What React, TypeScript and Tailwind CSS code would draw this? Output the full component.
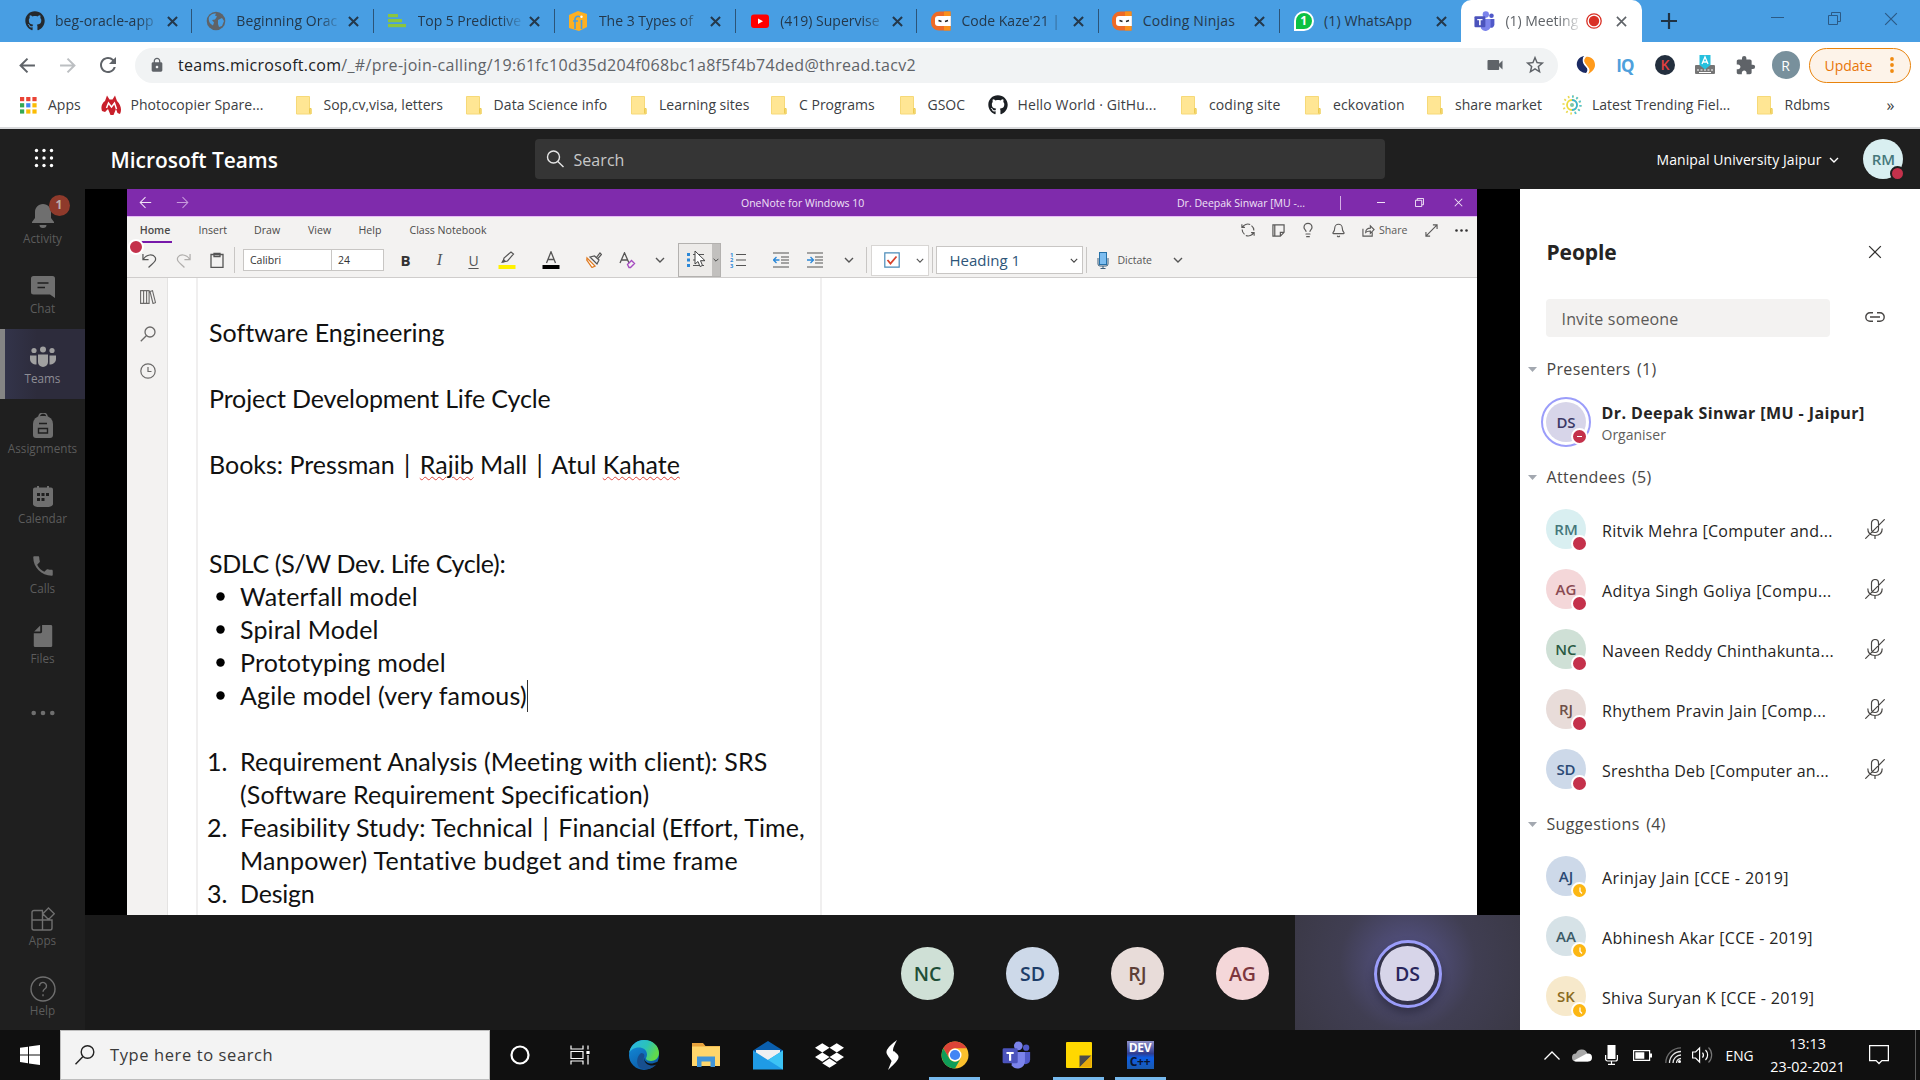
import React from "react";
import { FaGithub, FaDropbox } from "react-icons/fa";
import { MdLock, MdExtension, MdVideocam, MdStarBorder, MdRefresh, MdPhone } from "react-icons/md";
import { Bell, Lightbulb } from "lucide-react";

type P = { className?: string };

/* ---------- small shared glyphs ---------- */
const Cross = ({ className = "" }: P) => (
  <svg viewBox="0 0 12 12" className={className} fill="none" stroke="currentColor"><path d="M1 1l10 10M11 1L1 11" /></svg>
);
const Chevron = ({ className = "" }: P) => (
  <svg viewBox="0 0 10 6" className={className} fill="none" stroke="currentColor" strokeWidth="1.4"><path d="M1 1l4 4 4-4" /></svg>
);
const Arrow = ({ className = "" }: P) => (
  <svg viewBox="0 0 16 16" className={className} fill="none" stroke="currentColor"><path d="M15 8H1.5M8 1.5L1.5 8 8 14.5" /></svg>
);
const TeamsLogo = ({ className = "" }: P) => (
  <svg viewBox="0 0 24 24" className={className}>
    <circle cx="20" cy="5.5" r="2.6" fill="#5059c9" />
    <path d="M16 9h7.3v6.5a3.7 3.7 0 0 1-5 3.4z" fill="#5059c9" />
    <circle cx="13.5" cy="4" r="3.6" fill="#7b83eb" />
    <path d="M8 9h11v8a6 6 0 0 1-11 3z" fill="#7b83eb" />
    <rect x="0.5" y="6" width="12.5" height="12.5" rx="1.2" fill="#4b53bc" />
    <path d="M3.7 9h6v1.7H7.6v5.6H5.8v-5.6H3.7z" fill="#fff" />
  </svg>
);

/* ---------- browser tabs ---------- */
const Globe = () => (
  <svg viewBox="0 0 20 20" className="size-5">
    <circle cx="10" cy="10" r="9.3" fill="#5f6368" />
    <path d="M3 6c2-3 5-4 7-3.500l-1 2 2 1-2 3-3 .5 2 2.500-1 3C4 13 2 10 3 6zM12 9l4-2 2 3-2 5-3 1-1-3z" fill="#489ee3" />
  </svg>
);
const Bars = () => (
  <svg viewBox="0 0 20 20" className="size-5" fill="#8bc53f">
    <rect x="1" y="3" width="10" height="3.200" /><rect x="1" y="8" width="14" height="3.200" /><rect x="1" y="13" width="18" height="3.200" />
  </svg>
);
const Cube = () => (
  <svg viewBox="0 0 20 20" className="size-5">
    <path d="M1 4l9-4 9 3v13l-8 4-10-3z" fill="#fdb022" />
    <path d="M7 18V8a3 3 0 0 1 5-2M5 10h5M13.500 9v9" stroke="#489ee3" strokeWidth="1.600" fill="none" />
    <circle cx="13.500" cy="5.800" r="1.200" fill="#fff" />
  </svg>
);
const YouTube = () => (
  <svg viewBox="0 0 20 20" className="size-5"><rect x="1" y="3.500" width="18" height="13.500" rx="3" fill="#f00" /><path d="M8 7.500l5 2.800-5 2.800z" fill="#fff" /></svg>
);
const Ninja = () => (
  <svg viewBox="0 0 20 20" className="size-5">
    <path d="M19.500 .5v19H8a8 8 0 0 1-8-8V9A8.500 8.500 0 0 1 8.500 .5z" fill="#ee6a26" />
    <path d="M13 .5h6.500v4.500H13zM13 15h6.500v4.500H13z" fill="#f9901b" />
    <path d="M19.800 5v10H7a3 3 0 0 1-3-3V8a3 3 0 0 1 3-3z" fill="#fff" />
    <path d="M7.500 9.500l3 1M17 9.500l-3 1" stroke="#222" strokeWidth="1.600" />
  </svg>
);
const WhatsApp = () => (
  <span className="flex size-5 items-center justify-center rounded-full rounded-bl-sm border-2 border-white bg-[#0cc143] text-[12px] font-bold leading-none text-white">1</span>
);

const tabs = [
  { t: "beg-oracle-app", icon: <FaGithub className="size-5 text-[#24292e]" />, cls: "tracking-[0.05px]" },
  { t: "Beginning Orac", icon: <Globe />, cls: "tracking-[0.1px]" },
  { t: "Top 5 Predictive", icon: <Bars />, cls: "-tracking-[0.05px]" },
  { t: "The 3 Types of", icon: <Cube />, cls: "" },
  { t: "(419) Supervise", icon: <YouTube />, cls: "" },
  { t: "Code Kaze'21 |", icon: <Ninja />, cls: "" },
  { t: "Coding Ninjas", icon: <Ninja />, cls: "tracking-[0.2px]" },
  { t: "(1) WhatsApp", icon: <WhatsApp />, cls: "tracking-[0.1px]" },
];

const TabStrip = () => (
  <div className="flex h-[42px] bg-[#489ee3] pl-[11px] text-[#24384b]">
    {tabs.map((tab, i) => (
      <div key={tab.t} className="flex w-[181.3px] shrink-0 items-center pl-[13.500px]">
        <span className="w-[30.500px]">{tab.icon}</span>
        <span className={"w-[106px] whitespace-nowrap text-sm " + (i < 6 ? "[mask-image:linear-gradient(90deg,#000_78%,#0003_96%)]" : "")}>
          <span className={tab.cls}>{tab.t}</span>
        </span>
        <Cross className="ml-[5.500px] size-[11px] stroke-[2.200]" />
        <span className={i < 7 ? "ml-auto h-6 w-px bg-[#2c5478]" : ""} />
      </div>
    ))}
    <div className="flex h-[42px] w-[181px] shrink-0 items-center rounded-t-[10px] bg-white pl-[13px] text-[#5f6368]">
      <TeamsLogo className="size-[21px]" />
      <span className="ml-[10px] w-[76px] whitespace-nowrap text-sm [mask-image:linear-gradient(90deg,#000_70%,#0003_96%)]">(1) Meeting</span>
      <svg viewBox="0 0 16 16" className="ml-[5px] size-4"><circle cx="8" cy="8" r="7.200" fill="none" stroke="#d93025" strokeWidth="1.300" /><circle cx="8" cy="8" r="5.200" fill="#d93025" /></svg>
      <Cross className="ml-[14px] size-[11px] stroke-[1.800]" />
    </div>
    <svg viewBox="0 0 16 16" className="ml-[19px] mt-[13px] size-4 stroke-[#1f3244]" strokeWidth="2.200"><path d="M8 0v16M0 8h16" /></svg>
    <div className="ml-auto flex items-start gap-[43.500px] pr-[22px] pt-[12px] text-[#2b5a86]">
      <svg viewBox="0 0 13 13" className="size-[13px]" stroke="currentColor"><path d="M0 5.500h13" /></svg>
      <svg viewBox="0 0 13 13" className="size-[13px]" stroke="currentColor" fill="none"><path d="M.5 3.500h9v9h-9zM3.500 3.500v-3h9v9h-3" /></svg>
      <Cross className="size-[14px] stroke-[1]" />
    </div>
  </div>
);

/* ---------- address bar ---------- */
const AddressBar = () => (
  <div className="flex h-[46px] items-center bg-white text-[#5f6368]">
    <Arrow className="ml-[19px] size-[17px] stroke-[1.900]" />
    <Arrow className="ml-[23px] size-[17px] rotate-180 stroke-[1.900] text-[#bcbfc2]" />
    <MdRefresh className="ml-[20px] size-[24px]" />
    <div className="ml-[15px] flex h-[35px] w-[1423px] items-center rounded-full bg-[#f1f3f4]">
      <MdLock className="ml-[14px] size-4" />
      <span className="ml-[13px] whitespace-nowrap text-base tracking-[0.306px]">
        <span className="text-[#202124]">teams.microsoft.com</span>/_#/pre-join-calling/19:61fc10d35d204f068bc1a8f5f4b74ded@thread.tacv2
      </span>
      <MdVideocam className="ml-auto size-5" />
      <MdStarBorder className="ml-[19px] mr-[12px] size-[22px]" />
    </div>
    <svg viewBox="0 0 20 20" className="ml-[17.500px] size-5">
      <path d="M8 1C3 2 0 6 1 11c1 4 5 7 9 7 3-2 2-4 0-6C7 9 6 6 8 1z" fill="#1b2a63" />
      <path d="M10 2c5-1 9 3 9 8 0 4-3 7-7 9 3-4 1-6-1-8-3-3-4-6-1-9z" fill="#ff9a1b" />
      <path d="M8 2c-2 4 0 6 2 8.500 2 2.500 3 4 1 7.500" stroke="#fff" strokeWidth="1.200" fill="none" />
    </svg>
    <span className="ml-[20px] w-[19px] text-center text-[17px] font-bold leading-none tracking-[-0.800px] text-[#4ea0dc]">IQ</span>
    <span className="ml-[20.500px] flex size-5 items-center justify-center rounded-full bg-[#232f3e] text-[14px] font-semibold leading-none text-[#e2403f]">K</span>
    <svg viewBox="0 0 20 20" className="ml-[20px] size-5">
      <rect x="0" y="10" width="20" height="9" rx="1" fill="#757575" />
      <path d="M2 15h2m1.500 0h2m1.500 0h2m1.500 0h2m1.500 0h2M4 17.500h12" stroke="#fff" strokeWidth="1.200" />
      <path d="M4.500 0h11v10L10 14.500 4.500 10z" fill="#26c0de" />
      <path d="M7 9l3-7 3 7M8 7h4" stroke="#fff" strokeWidth="1.300" fill="none" />
    </svg>
    <MdExtension className="ml-[19.500px] size-[21px]" />
    <span className="ml-[16px] flex size-7 items-center justify-center rounded-full bg-[#78909c] text-[14px] text-white">R</span>
    <div className="ml-[9px] flex h-[35px] w-[102px] items-center rounded-full border border-[#e8830c] bg-[#fdf3e9] pl-[15px] text-[14px] text-[#e8760a]">
      Update
      <svg viewBox="0 0 4 18" className="ml-[18px] h-[18px] w-1 fill-[#f08a10]"><circle cx="2" cy="3" r="1.900" /><circle cx="2" cy="9" r="1.900" /><circle cx="2" cy="15" r="1.900" /></svg>
    </div>
  </div>
);

/* ---------- bookmarks ---------- */
const Folder = () => (
  <svg viewBox="0 0 20 20" className="size-5">
    <path d="M2.500 1.500h13v12h1.500v5.500H2.500z" fill="#ffe694" stroke="#f6d978" />
    <path d="M15.500 18.500v-5h1.500v5.500" fill="none" stroke="#eccb52" />
  </svg>
);
const AppsGrid = () => (
  <svg viewBox="0 0 20 20" className="size-5">
    {["#ea4335", "#ea4335", "#ea4335", "#34a853", "#4285f4", "#fbbc04", "#34a853", "#fbbc04", "#fbbc04"].map((c, i) => (
      <rect key={i} x={2 + (i % 3) * 6.2} y={2 + Math.floor(i / 3) * 6.2} width="4.200" height="4.200" fill={c} />
    ))}
  </svg>
);
const MLogo = () => (
  <svg viewBox="0 0 20 20" className="size-5">
    <path d="M6 .5l2.500 4h3L14 .5l2 5.500c4 4 5 9 3 13l-2.500-1L15 14l-2.500 6h-3L7 14l-3 3-3-1C-.5 12 1 8 4 6z" fill="#c81f2a" />
    <path d="M5.500 13L7.500 8l3 4 3-4 2 6" stroke="#fff" strokeWidth="1.500" fill="none" />
  </svg>
);
const Sun = () => (
  <svg viewBox="0 0 20 20" className="size-5" fill="none">
    <circle cx="10" cy="10" r="8.500" stroke="#e9d94f" strokeWidth="2.200" strokeDasharray="1.600 2.850" />
    <circle cx="10" cy="10" r="5" stroke="#edda3e" strokeWidth="1.800" />
    <path d="M10 1.500a8.500 8.500 0 0 1 0 17" stroke="#4cc3e0" strokeWidth="2.200" strokeDasharray="1.600 2.850" />
    <path d="M10 5a5 5 0 0 1 0 10" stroke="#35b5dc" strokeWidth="1.800" />
    <circle cx="10" cy="10" r="2" fill="#7cc6a5" />
  </svg>
);
const bookmarks = [
  { t: "Apps", icon: <AppsGrid />, w: "w-[82.500px]", g: "" },
  { t: "Photocopier Spare...", icon: <MLogo />, w: "w-[193px]", g: "tracking-[0.050px]" },
  { t: "Sop,cv,visa, letters", icon: <Folder />, w: "w-[170px]", g: "" },
  { t: "Data Science info", icon: <Folder />, w: "w-[165.500px]", g: "tracking-[0.100px]" },
  { t: "Learning sites", icon: <Folder />, w: "w-[140px]", g: "" },
  { t: "C Programs", icon: <Folder />, w: "w-[128.500px]", g: "" },
  { t: "GSOC", icon: <Folder />, w: "w-[90px]", g: "" },
  { t: "Hello World · GitHu...", icon: <FaGithub className="size-5 text-[#1b1f23]" />, w: "w-[191.500px]", g: "tracking-[0.130px]" },
  { t: "coding site", icon: <Folder />, w: "w-[124px]", g: "tracking-[0.120px]" },
  { t: "eckovation", icon: <Folder />, w: "w-[122px]", g: "tracking-[0.100px]" },
  { t: "share market", icon: <Folder />, w: "w-[137px]", g: "" },
  { t: "Latest Trending Fiel...", icon: <Sun />, w: "w-[192.500px]", g: "" },
  { t: "Rdbms", icon: <Folder />, w: "w-[132px]", g: "" },
];
const Bookmarks = () => (
  <div className="flex h-[41px] items-center border-b-2 border-[#d9dadc] bg-white pb-[5px] pl-[18px] text-sm text-[#3c4043]">
    {bookmarks.map((b) => (
      <div key={b.t} className={"flex shrink-0 items-center gap-[10px] whitespace-nowrap " + b.w}>{b.icon}<span className={b.g}>{b.t}</span></div>
    ))}
    <span className="text-base leading-none">»</span>
  </div>
);

/* ---------- Teams header ---------- */
const TeamsHeader = () => (
  <div className="flex h-[60px] items-center bg-[#1f1f1f]">
    <svg viewBox="0 0 20 20" className="mb-[2px] ml-[33.500px] size-5 fill-white">
      {[0, 1, 2, 3, 4, 5, 6, 7, 8].map((i) => <circle key={i} cx={2.5 + (i % 3) * 7.5} cy={2.5 + Math.floor(i / 3) * 7.5} r="1.700" />)}
    </svg>
    <span className="ml-[57px] w-[424px] whitespace-nowrap pt-[2px] text-[20.900px] font-semibold leading-none text-white">Microsoft Teams</span>
    <div className="flex h-10 w-[850px] items-center rounded bg-[#353535] text-[#c8c8c8]">
      <svg viewBox="0 0 18 18" className="ml-[11px] size-[18px]" fill="none" stroke="#e6e6e6" strokeWidth="1.400"><circle cx="7.500" cy="7" r="6" /><path d="M11.800 11.500L17.500 17" /></svg>
      <span className="ml-[10px] pt-[2px] text-base tracking-[0.050px]">Search</span>
    </div>
    <span className="ml-[272px] whitespace-nowrap pt-px text-sm tracking-[0.090px] text-white">Manipal University Jaipur</span>
    <Chevron className="ml-[8px] mt-[2px] h-[6px] w-[10px] text-white" />
    <div className="relative ml-[24px] flex size-10 items-center justify-center rounded-full bg-[#d9eff1] text-[15px] font-semibold text-[#45777b]">
      RM
      <span className="absolute bottom-[-2px] right-[-2px] size-[15px] rounded-full border-2 border-[#1f1f1f] bg-[#c4314b]" />
    </div>
  </div>
);

/* ---------- Teams rail ---------- */
const RailItem = ({ label, active, children }: { label: string; active?: boolean; children: React.ReactNode }) => (
  <div className={"flex h-[70px] w-[85px] flex-col items-center " + (active ? "border-l-[5px] border-[#858585] bg-[linear-gradient(90deg,#33344a_0%,#2d2c3c_40%)] pr-[5px] text-[#a0a0a0]" : "text-[#6f6f6f]")}>
    <span className="mt-[14px] flex h-7 items-center">{children}</span>
    <span className={"-mt-px whitespace-nowrap text-[11.700px] leading-[16px] " + (active ? "text-[#8d8d95]" : "text-[#5c5c5c]")}>{label}</span>
  </div>
);
const Rail = () => (
  <div className="flex w-[85px] shrink-0 flex-col bg-[#1f1f1f]">
    <RailItem label="Activity">
      <span className="relative -mt-[3px]">
        <svg viewBox="0 0 24 26" className="h-[26px] w-6" fill="currentColor"><path d="M12 1c-5 0-8 4-8 8v6l-3 4v1h22v-1l-3-4V9c0-4-3-8-8-8zM8.500 22h7a3.500 3 0 0 1-7 0z" /></svg>
        <span className="absolute -right-[15px] -top-[8px] flex size-[21px] items-center justify-center rounded-full bg-[#8f3a2b] text-[12px] font-bold text-[#bdb0ad]">1</span>
      </span>
    </RailItem>
    <RailItem label="Chat">
      <svg viewBox="0 0 24 24" className="size-6" fill="currentColor"><path d="M2.500 1h19A2.500 2.500 0 0 1 24 3.500V23l-5-3.500H2.500A2.500 2.500 0 0 1 0 17V3.500A2.500 2.500 0 0 1 2.500 1z" /><path d="M6.500 8h11M6.500 12.500h7.500" stroke="#1f1f1f" strokeWidth="1.400" /></svg>
    </RailItem>
    <RailItem label="Teams" active>
      <svg viewBox="0 0 26 22" className="h-[22px] w-[26px]" fill="currentColor"><circle cx="4" cy="4.500" r="2.600" /><circle cx="13" cy="3.500" r="3" /><circle cx="22" cy="4.500" r="2.600" /><path d="M0 9.500h6.500v9C3 18.500 0 16.500 0 13zM26 9.500h-6.500v9c3.500 0 6.500-2 6.500-5.500zM8 8.500h10V16a5 5 0 0 1-10 0z" /></svg>
    </RailItem>
    <RailItem label="Assignments">
      <svg viewBox="0 0 22 26" className="-mt-[2px] h-[26px] w-[22px]"><path d="M7 4a4 4 0 0 1 8 0" fill="none" stroke="currentColor" strokeWidth="1.600" /><path d="M1 11a8 8 0 0 1 8-8h4a8 8 0 0 1 8 8v11a3 3 0 0 1-3 3H4a3 3 0 0 1-3-3z" fill="currentColor" /><path d="M7 10.500h8M6.500 15.500h9V20h-9z" stroke="#1f1f1f" strokeWidth="1.400" fill="none" /></svg>
    </RailItem>
    <RailItem label="Calendar">
      <svg viewBox="0 0 22 22" className="size-[22px]" fill="currentColor"><path d="M5 0h2v2H5zM15 0h2v2h-2zM3 1.500h16a2 2 0 0 1 2 2V18c0 2-3 3-5 3H6c-2 0-5-1-5-3V3.500a2 2 0 0 1 2-2z" /><path d="M5 7h3v3H5zM9.500 7h3v3h-3zM14 7h3v3h-3zM5 12h3v3H5zM9.500 12h3v3h-3z" fill="#1f1f1f" /></svg>
    </RailItem>
    <RailItem label="Calls"><MdPhone className="-mt-[3px] size-[26px]" /></RailItem>
    <RailItem label="Files">
      <svg viewBox="0 0 20 26" className="-mt-[2px] h-6 w-5" fill="currentColor"><path d="M9 1h9.500A1.500 1.500 0 0 1 20 2.500v21a1.500 1.500 0 0 1-1.500 1.500h-17A1.500 1.500 0 0 1 0 23.500V10h7.500A1.500 1.500 0 0 0 9 8.500zM7 1.500V8H.5z" /></svg>
    </RailItem>
    <RailItem label="">
      <svg viewBox="0 0 24 6" className="mt-[12px] h-[6px] w-6" fill="currentColor"><circle cx="2.700" cy="3" r="2.300" /><circle cx="12" cy="3" r="2.300" /><circle cx="21.300" cy="3" r="2.300" /></svg>
    </RailItem>
    <div className="-mb-px mt-auto">
      <RailItem label="Apps">
        <svg viewBox="0 0 24 24" className="size-6" fill="none" stroke="currentColor" strokeWidth="1.400"><path d="M12 3.500H3a2 2 0 0 0-2 2V21a2 2 0 0 0 2 2h16a2 2 0 0 0 2-2v-8H1M11.500 3.500V23M17.500 1l5.800 5.800-5.800 5.700-5.700-5.700z" /></svg>
      </RailItem>
      <RailItem label="Help">
        <svg viewBox="0 0 26 26" className="size-[26px]" fill="none" stroke="currentColor" strokeWidth="1.400"><circle cx="13" cy="13" r="12" /><path d="M9.500 10a3.500 3.500 0 1 1 5.500 2.800c-1.200.8-2 1.500-2 3M13 18.200v2" /></svg>
      </RailItem>
    </div>
  </div>
);

/* ---------- shared OneNote window ---------- */
const NoteTitle = () => (
  <div className="flex h-7 items-center border-b border-[#e6bdf6] bg-[#7f2bac] text-[10.500px] leading-none text-[#f0e2f6]">
    <Arrow className="ml-[12px] size-[13px] stroke-[1.300]" />
    <Arrow className="ml-[24px] size-[13px] rotate-180 stroke-[1.300] text-[#c79bdc]" />
    <span className="ml-[552px] w-[436px] whitespace-nowrap pt-[2px]">OneNote for Windows 10</span>
    <span className="w-[163px] whitespace-nowrap pt-[2px]">Dr. Deepak Sinwar [MU -...</span>
    <span className="h-[14px] w-px bg-[#d5b0e6]" />
    <span className="ml-[36px] h-px w-2 bg-[#f0e2f6]" />
    <svg viewBox="0 0 10 10" className="ml-[30px] size-[9px]" fill="none" stroke="currentColor" strokeWidth="1.100"><path d="M.5 2.500h7v7h-7zM2.500 2.500v-2h7v7h-2" /></svg>
    <Cross className="ml-[30px] size-[9px] stroke-[1.400]" />
  </div>
);
const Sep = ({ className = "" }: P) => <span className={"h-[26px] w-px shrink-0 bg-[#c8c6c4] " + className} />;

const Indent = ({ flip, className = "" }: { flip?: boolean; className?: string }) => (
  <svg viewBox="0 0 16 16" className={"size-4 " + className} fill="none">
    <path d="M0 1h16M8 5h8M8 8h8M8 11h8M0 15h16" stroke="#555" strokeWidth="1.100" />
    <path d={flip ? "M0 8h6M3.500 5l3 3-3 3" : "M6.500 8h-6M3.500 5l-3 3 3 3"} stroke="#2b88d8" strokeWidth="1.300" />
  </svg>
);
const RibbonTools = () => (
  <div className="flex h-[35px] items-center border-b border-[#cfcdcc] text-[#555] shadow-[0_2px_3px_#0000000d]">
    <svg viewBox="0 0 16 16" className="ml-[15px] size-[15px]" fill="none" stroke="currentColor" strokeWidth="1.300"><path d="M1 1v6h6M1.500 6.500C5 1 12 1 14 4.500c2 4-2 6-7 11" /></svg>
    <svg viewBox="0 0 16 16" className="ml-[19px] size-[15px] -scale-x-100 text-[#b0aeac]" fill="none" stroke="currentColor" strokeWidth="1.300"><path d="M1 1v6h6M1.500 6.500C5 1 12 1 14 4.500c2 4-2 6-7 11" /></svg>
    <svg viewBox="0 0 14 16" className="ml-[19px] h-4 w-[14px]" fill="none" stroke="currentColor" strokeWidth="1.300"><path d="M1 2.500h12v13H1zM4 4.500v-3h6v3z" /></svg>
    <Sep className="ml-[10px]" />
    <div className="ml-[8px] flex h-[22px] w-[141px] border border-[#c8c6c4] bg-white text-[10.500px] leading-[21px] text-[#333]">
      <span className="w-[88px] border-r border-[#c8c6c4] pl-[6px]">Calibri</span><span className="pl-[6px]">24</span>
    </div>
    <b className="ml-[16.500px] w-[10px] text-[15px] leading-none text-[#333]">B</b>
    <i className="ml-[24px] w-[10px] text-center font-['Liberation_Serif'] text-[16px] leading-none">I</i>
    <span className="ml-[23.500px] w-[11px] text-center text-[14px] leading-[15px] underline underline-offset-2">U</span>
    <svg viewBox="0 0 18 18" className="ml-[19px] size-[18px]" fill="none"><path d="M5 11l1-4 7-6 2.500 2-6 7z" stroke="#555" strokeWidth="1.200" /><path d="M3 12l2.500-4 3 2.500z" fill="#555" /><path d="M.5 14h17v4H.5z" fill="#fff100" /></svg>
    <svg viewBox="0 0 18 18" className="ml-[25.500px] size-[18px]" fill="none"><path d="M4.500 12L9 .8 13.500 12M6 8.500h6" stroke="#555" strokeWidth="1.300" /><path d="M.5 14h17v4H.5z" fill="#000" /></svg>
    <svg viewBox="0 0 16 16" className="ml-[26px] size-4" fill="none"><path d="M1 6l8 8-3 1.500L.8 8z" fill="#fff" stroke="#e07b22" strokeWidth="1.300" /><path d="M4 5l7 7 2-4-4.500-4zM10 6l4-5 1.500 1.500L11.500 7" stroke="#555" strokeWidth="1.200" /></svg>
    <svg viewBox="0 0 17 17" className="ml-[17px] size-[17px]" fill="none"><path d="M1 11L5.500 .8 10 11M2.500 8h6" stroke="#555" strokeWidth="1.300" /><path d="M8.500 12.500l4-4 3 3-4 4h-1.500z" stroke="#a54bc0" strokeWidth="1.400" /></svg>
    <Chevron className="ml-[19px] h-[6px] w-[10px]" />
    <div className="ml-[13px] flex h-[34px] w-[43px] shrink-0 border border-[#b3b1af] bg-[#edebe9]">
      <div className="relative flex w-[33px] items-center justify-center">
        <svg viewBox="0 0 17 16" className="h-4 w-[17px]"><path d="M0 1h3v3H0zM0 6.500h3v3H0zM0 12h3v3H0z" fill="#2b88d8" /><path d="M6 2.500h11M6 8h11M6 13.500h11" stroke="#555" strokeWidth="1.100" /></svg>
        <svg viewBox="0 0 12 18" className="absolute left-[15px] top-[6px] h-[18px] w-3"><path d="M1 1v13l3-2.500 2 5 2.500-1-2-4.800H11z" fill="#fff" stroke="#444" /></svg>
      </div>
      <div className="flex flex-1 items-center justify-center bg-[#c2c0be]"><Chevron className="h-[4px] w-[6px] text-[#333]" /></div>
    </div>
    <svg viewBox="0 0 16 16" className="ml-[9px] size-4"><path d="M6 2.500h10M6 8h10M6 13.500h10" stroke="#555" strokeWidth="1.100" /><g fill="#2b88d8" fontSize="5.800" fontWeight="700"><text x="0" y="4.800">1</text><text x="0" y="10.200">2</text><text x="0" y="15.800">3</text></g></svg>
    <Indent className="ml-[27px]" />
    <Indent flip className="ml-[18px]" />
    <Chevron className="ml-[21px] h-[6px] w-[10px]" />
    <Sep className="ml-[12px]" />
    <div className="ml-[4px] flex h-[31px] w-[58px] items-center border border-[#d8d6d4] bg-white">
      <svg viewBox="0 0 16 16" className="ml-[12px] size-4" fill="none"><path d="M.8 .8h14.400v14.400H.8z" stroke="#4a8ab8" strokeWidth="1.200" /><path d="M3.500 8l3 3.500 6-7" stroke="#d8422c" strokeWidth="1.800" /></svg>
      <Chevron className="ml-[16px] h-[5px] w-[8px]" />
    </div>
    <Sep className="ml-[3px]" />
    <div className="ml-[3px] flex h-[28px] w-[147px] items-center justify-between border border-[#c8c6c4] bg-white pl-[13px] pr-[4px] text-[15px] leading-none text-[#2e5579]">
      Heading 1<Chevron className="h-[5px] w-[8px] text-[#444]" />
    </div>
    <Sep className="ml-[3px]" />
    <svg viewBox="0 0 12 17" className="ml-[10px] h-[17px] w-3"><path d="M1 6v6a2 2 0 0 0 2 2h6a2 2 0 0 0 2-2V6M6 14v3M3.500 16.500h5" stroke="#3b5d7a" fill="none" /><rect x="2.500" y=".5" width="7" height="12" fill="#7dbdf0" stroke="#2571a8" /></svg>
    <span className="ml-[9px] text-[10.500px] leading-none">Dictate</span>
    <Chevron className="ml-[21px] h-[6px] w-[10px]" />
  </div>
);
const RibbonActions = () => (
  <div className="flex h-[26px] items-center text-[10.600px] text-[#5a5958]">
    <svg viewBox="0 0 16 16" className="size-[14px]" fill="none" stroke="currentColor" strokeWidth="1.300"><path d="M1 1.500V5h3.500M1.500 5a7 7 0 0 1 9-3.200M15 14.500V11h-3.500M14.500 11a7 7 0 0 1-9 3.200M1.300 7.500A7 7 0 0 0 4 13M14.700 8.500A7 7 0 0 0 12 3" /></svg>
    <svg viewBox="0 0 14 14" className="ml-[17px] size-[13px]" fill="none" stroke="currentColor" strokeWidth="1.300"><path d="M1 1h12v8l-4 4H1zM13 9H9v4M3 1v12" /></svg>
    <Lightbulb className="ml-[15px] size-[16px] stroke-[1.800]" />
    <Bell className="ml-[15px] size-[15px] stroke-[1.800]" />
    <svg viewBox="0 0 14 14" className="ml-[16px] size-[13px]" fill="none" stroke="currentColor" strokeWidth="1.200"><path d="M1 5v8h10V9M4 9c0-3 2-4.500 5-4.500V2l4 4-4 4V7.500C7 7.500 5 8 4 9z" /></svg>
    <span className="ml-[4px] w-[28px] pt-px">Share</span>
    <svg viewBox="0 0 14 14" className="ml-[18px] size-[13px]" fill="none" stroke="currentColor" strokeWidth="1.200"><path d="M1 13L13 1M8.500 1H13v4.500M1 8.500V13h4.500" /></svg>
    <svg viewBox="0 0 13 3" className="ml-[17px] h-[3px] w-[13px]" fill="#333"><circle cx="1.500" cy="1.500" r="1.300" /><circle cx="6.500" cy="1.500" r="1.300" /><circle cx="11.500" cy="1.500" r="1.300" /></svg>
  </div>
);
const Bad = ({ children }: { children: React.ReactNode }) => (
  <span className="underline decoration-[#e0483e] decoration-wavy decoration-[0.800px] underline-offset-[2px]">{children}</span>
);
const Pipe = () => <span className="mx-[3px]">|</span>;
const Item = ({ mark, className = "", children }: { mark: string; className?: string; children: React.ReactNode }) => (
  <div className="flex">
    <span className="w-[31px] shrink-0">
      {mark === "•" ? <svg viewBox="0 0 10 10" className="ml-[7px] mt-[12px] size-[9px]"><circle cx="5" cy="5" r="4.700" /></svg> : <span className="-ml-[2px]">{mark}</span>}
    </span>
    <span className={"whitespace-nowrap " + className}>{children}</span>
  </div>
);
const NoteBody = () => (
  <div className="flex min-h-0 flex-1 overflow-hidden bg-white">
    <div className="flex w-[41px] shrink-0 flex-col items-center border-r border-[#e4e3e2] bg-[#f3f2f1] pl-px text-[#6b6a69]">
      <svg viewBox="0 0 16 14" className="mt-[12px] h-[14px] w-4" fill="none" stroke="currentColor" strokeWidth="1.100"><path d="M.6 .6h3v12.800h-3zM3.600 .6h3v12.800h-3zM6.600 .6h2.500v12.800H6.600zM10 1.500l2.500-.8 3 12-2.500.8z" /></svg>
      <svg viewBox="0 0 16 16" className="mt-[22px] size-4" fill="none" stroke="currentColor" strokeWidth="1.300"><circle cx="10" cy="6" r="5" /><path d="M6.300 9.700L.8 15.200" /></svg>
      <svg viewBox="0 0 16 16" className="mt-[21px] size-4" fill="none" stroke="currentColor" strokeWidth="1.200"><circle cx="8" cy="8" r="7.200" /><path d="M8 4v4.500h3.500" /></svg>
    </div>
    <div className="ml-[28px] w-[626px] shrink-0 border-x-2 border-[#f0efef] pl-[11px] pt-[38px] font-['Lato'] text-[25px] leading-[33px] text-[#111]">
      <p className="tracking-[0.050px]">Software Engineering</p>
      <p className="mt-[33px] tracking-[-0.120px]">Project Development Life Cycle</p>
      <p className="mt-[33px]">Books: Pressman <Pipe /> <Bad>Rajib</Bad> Mall <Pipe /> Atul <Bad>Kahate</Bad></p>
      <p className="mt-[66px] tracking-[-0.370px]">SDLC (S/W Dev. Life Cycle):</p>
      <Item mark="•" className="tracking-[0.180px]">Waterfall model</Item>
      <Item mark="•" className="tracking-[0.120px]">Spiral Model</Item>
      <Item mark="•" className="tracking-[0.150px]">Prototyping model</Item>
      <Item mark="•" className="tracking-[0.190px]"><span className="border-r border-[#333] pb-[2px]">Agile model (very famous)</span></Item>
      <div className="mt-[33px]" />
      <Item mark="1." className="tracking-[0.110px]">Requirement Analysis (Meeting with client): SRS<br />(Software Requirement Specification)</Item>
      <Item mark="2.">
        <span className="tracking-[0.080px]">Feasibility Study: Technical <Pipe /> Financial (Effort, Time,</span><br />
        <span className="tracking-[0.270px]">Manpower) Tentative budget and time frame</span>
      </Item>
      <Item mark="3." className="tracking-[-0.200px]">Design</Item>
    </div>
  </div>
);
const SharedScreen = () => (
  <div className="relative flex h-[726px] w-[1350px] flex-col bg-[#f3f2f1]">
    <NoteTitle />
    <div className="flex justify-between pr-[9px]">
      <div className="flex h-[26px] pl-[11.500px] text-[10.600px] leading-none text-[#4b4a49]">
        <div className="w-[33px] pt-[8px] text-center font-semibold">
          Home
          <div className="mt-[5px] h-[2px] bg-[#7719aa]" />
        </div>
        <span className="ml-[27px] w-[55.500px] pt-[8px]">Insert</span>
        <span className="w-[54px] pt-[8px]">Draw</span>
        <span className="w-[50.500px] pt-[8px]">View</span>
        <span className="w-[51px] pt-[8px]">Help</span>
        <span className="whitespace-nowrap pt-[8px]">Class Notebook</span>
      </div>
      <RibbonActions />
    </div>
    <RibbonTools />
    <NoteBody />
    <span className="absolute left-[1px] top-[50px] size-[16px] rounded-full border-2 border-white bg-[#c4314b]" />
  </div>
);

/* ---------- participants strip ---------- */
const strip = [
  { t: "NC", c: "bg-[#cfe0d6] text-[#1f4e37]" },
  { t: "SD", c: "bg-[#cdd9e9] text-[#1d3d68]" },
  { t: "RJ", c: "bg-[#e8dcd9] text-[#5e3f37]" },
  { t: "AG", c: "bg-[#f4d7d9] text-[#7c363e]" },
];
const Stage = () => (
  <div className="flex w-[1435px] shrink-0 flex-col">
    <div className="flex h-[726px] justify-start bg-black pl-[42px]"><SharedScreen /></div>
    <div className="flex h-[115px] items-center bg-[#1a1a1a]">
      <div className="ml-[816px] flex gap-[52px] pt-[2px]">
        {strip.map((s) => (
          <span key={s.t} className={"flex size-[53px] items-center justify-center rounded-full text-[19.500px] font-semibold " + s.c}>{s.t}</span>
        ))}
      </div>
      <div className="ml-auto flex h-[115px] w-[225px] items-center justify-center bg-[radial-gradient(circle_at_50%_42%,#56548a_0%,#4b496d_28%,#403e52_52%,#3a3845_100%)] pt-[2px]">
        <span className="flex size-[68px] items-center justify-center rounded-full border-[3px] border-[#9b9dfa] bg-[#34334a] shadow-[0_5px_8px_#0000004d]">
          <span className="flex size-[55px] items-center justify-center rounded-full bg-[#d7d5e9] text-[19.500px] font-semibold text-[#29265c]">DS</span>
        </span>
      </div>
    </div>
  </div>
);

/* ---------- people panel ---------- */
const Status = ({ kind }: { kind: string }) => (
  <span className={"absolute -bottom-[3px] -right-[2px] flex size-[17px] items-center justify-center rounded-full border-[2.500px] border-white " + (kind === "away" ? "bg-[#fcb714]" : "bg-[#c4314b]")}>
    {kind === "dnd" && <span className="h-[1.500px] w-[5px] bg-white" />}
    {kind === "away" && <svg viewBox="0 0 10 10" className="size-[10px]" fill="none" stroke="#fff" strokeWidth="1.300"><path d="M5 1.500v4l2 2" /></svg>}
  </span>
);
const MicOff = () => (
  <svg viewBox="0 0 20 20" className="size-5" fill="none" stroke="#484644" strokeWidth="1.200"><path d="M6.500 4a3.500 3.500 0 0 1 7 0v6a3.500 3.500 0 0 1-7 0zM2.800 9.500c0 4.500 3 7 7.200 7s7.200-2.500 7.200-7M10 16.500V20M.3 19.700L19.700 .3" /></svg>
);
const attendees = [
  { i: "RM", n: "Ritvik Mehra [Computer and...", c: "bg-[#d9eff1] text-[#45777b]", g: "tracking-[0.270px]" },
  { i: "AG", n: "Aditya Singh Goliya [Compu...", c: "bg-[#f4d7d9] text-[#8a4a52]", g: "tracking-[0.390px]" },
  { i: "NC", n: "Naveen Reddy Chinthakunta...", c: "bg-[#cfe0d6] text-[#2a5a42]", g: "tracking-[0.250px]" },
  { i: "RJ", n: "Rhythem Pravin Jain [Comp...", c: "bg-[#e8dcd9] text-[#6e5048]", g: "tracking-[0.310px]" },
  { i: "SD", n: "Sreshtha Deb [Computer an...", c: "bg-[#cdd9e9] text-[#2b4a75]", g: "tracking-[0.220px]" },
];
const suggestions = [
  { i: "AJ", n: "Arinjay Jain [CCE - 2019]", c: "bg-[#cdd9e9] text-[#2b4a75]", g: "tracking-[0.420px]" },
  { i: "AA", n: "Abhinesh Akar [CCE - 2019]", c: "bg-[#d6e2e7] text-[#3c5b68]", g: "tracking-[0.350px]" },
  { i: "SK", n: "Shiva Suryan K [CCE - 2019]", c: "bg-[#f7e9cb] text-[#8a6b22]", g: "tracking-[0.340px]" },
];
const Section = ({ label, count, className = "" }: { label: string; count: string; className?: string }) => (
  <div className={"flex h-5 items-center text-base leading-none text-[#484644] " + className}>
    <svg viewBox="0 0 9 5" className="ml-[8px] h-[5px] w-[9px] fill-[#a3a8b0]"><path d="M0 0h9L4.500 5z" /></svg>
    <span className="ml-[9.500px] tracking-[0.350px]">{label} <span className="ml-[2px]">({count})</span></span>
  </div>
);
const Row = ({ p, muted }: { p: (typeof attendees)[number]; muted?: boolean }) => (
  <div className="flex h-[60px] items-center pl-[26px]">
    <span className={"relative flex size-10 shrink-0 items-center justify-center rounded-full text-[15px] font-semibold " + p.c}>{p.i}<Status kind={muted ? "busy" : "away"} /></span>
    <span className={"ml-[16px] w-[263px] whitespace-nowrap pt-[3px] text-base leading-none text-[#252423] " + p.g}>{p.n}</span>
    {muted && <MicOff />}
  </div>
);
const People = () => (
  <div className="flex flex-1 flex-col overflow-hidden bg-white">
    <div className="mt-[52px] flex h-[22px] items-center justify-between pl-[26.500px] pr-[38px]">
      <span className="text-[21px] font-bold leading-none tracking-[-0.100px] text-[#252423]">People</span>
      <Cross className="size-[14px] stroke-[1.100] text-[#323130]" />
    </div>
    <div className="mt-[36px] flex h-[38px] items-center pl-[26px]">
      <div className="flex h-[38px] w-[284px] items-center rounded bg-[#f3f2f1] pl-[15.500px] pt-[2px] text-base tracking-[0.170px] text-[#5b5957]">Invite someone</div>
      <svg viewBox="0 0 20 10" className="-mt-[3px] ml-[35px] h-[10px] w-5" fill="none" stroke="#484644" strokeWidth="1.400"><path d="M8 .8H5a4.200 4.200 0 0 0 0 8.400h3M12 .8h3a4.200 4.200 0 0 1 0 8.400h-3M5 5h10" /></svg>
    </div>
    <Section label="Presenters" count="1" className="mt-[22px]" />
    <div className="mt-[18px] flex h-[50px] pl-[21px]">
      <span className="relative flex size-[50px] shrink-0 items-center justify-center rounded-full border-2 border-[#9b9dfa]">
        <span className="relative flex size-10 items-center justify-center rounded-full bg-[#d7d5e9] text-[15px] font-semibold text-[#3c3966]">DS<Status kind="dnd" /></span>
      </span>
      <div className="ml-[10.500px] flex flex-col whitespace-nowrap pt-[8px] leading-none text-[#252423]">
        <span className="text-base font-bold leading-none tracking-[0.410px]">Dr. Deepak Sinwar [MU - Jaipur]</span>
        <span className="mt-[7px] text-sm leading-none text-[#605e5c]">Organiser</span>
      </div>
    </div>
    <Section label="Attendees" count="5" className="mt-[20px]" />
    <div className="mt-[12px]">{attendees.map((p) => <Row key={p.i} p={p} muted />)}</div>
    <Section label="Suggestions" count="4" className="mt-[15px]" />
    <div className="mt-[12px]">{suggestions.map((p) => <Row key={p.i} p={p} />)}</div>
  </div>
);

/* ---------- Windows taskbar ---------- */
const Edge = () => (
  <svg viewBox="0 0 30 30" className="size-[30px]">
    <defs>
      <linearGradient id="e1" x1="0" y1="0" x2="1" y2="0.400"><stop offset="0" stopColor="#2bb3ee" /><stop offset="0.600" stopColor="#2bc3b8" /><stop offset="1" stopColor="#61d94b" /></linearGradient>
      <linearGradient id="e2" x1="0" y1="0" x2="0.600" y2="1"><stop offset="0" stopColor="#1390df" /><stop offset="1" stopColor="#0c59a4" /></linearGradient>
    </defs>
    <circle cx="15" cy="15" r="15" fill="url(#e2)" />
    <path d="M0 14C1 5 8 0 15 0c9 0 15 6 15 13 0 5-4 8-8 8-3 0-5-1-5-2.500 0-1 1-1.500 1-4C18 10 14 7.500 10 7.500 5 7.500 1 10 0 14z" fill="url(#e1)" />
    <path d="M11 28c-4-3-4-11 1-15 3 0 4 2 3 4-2 6 5 9 12 6l1 .5C25 28 18 31 11 28z" fill="#174f8f" />
    <path d="M15.500 17c-1 4 3 7 8 6.500l4.500-1.500 3 0-3.500 5 0-2.500c-6 3-14-1-12-7.500z" fill="#101010" />
  </svg>
);
const Explorer = () => (
  <svg viewBox="0 0 28 26" className="h-[26px] w-7"><path d="M0 1h11l2.500 3H28v18H0z" fill="#e8a33d" /><path d="M0 4.500h28V24H0z" fill="#ffd66b" /><path d="M5 25V14.500h18V25h-4.500v-5.500h-9V25z" fill="#4095d9" /></svg>
);
const Mail = () => (
  <svg viewBox="0 0 30 29" className="h-[29px] w-[30px]"><path d="M0 9.500L15 0l15 9.500V16H0z" fill="#0a5fae" /><path d="M3 9h24v10H3z" fill="#eef0f2" /><path d="M0 9.500L15 19l15-9.500V28.500H0z" fill="#1f9be6" /><path d="M15 19l15-9.500v19z" fill="#3cc3f5" /></svg>
);
const Chrome = () => (
  <svg viewBox="0 0 28 28" className="size-7">
    <circle cx="14" cy="14" r="13.500" fill="#fbc02d" />
    <path d="M2.300 7.300A13.500 13.500 0 0 1 25.700 7.300H14A6.700 6.700 0 0 0 8.200 17.300z" fill="#db4437" />
    <path d="M2.300 7.300A13.500 13.500 0 0 0 14 27.500L19.800 17.300A6.700 6.700 0 0 1 8.200 17.300z" fill="#0f9d58" />
    <circle cx="14" cy="14" r="6.500" fill="#fff" /><circle cx="14" cy="14" r="5.100" fill="#4285f4" />
  </svg>
);
const Sticky = () => (
  <svg viewBox="0 0 26 26" className="size-[26px]"><rect width="26" height="26" rx="1" fill="#ffd800" /><path d="M13.500 25.500V13.500h12z" fill="#4c4a48" /><path d="M13.500 25.500l12-12v12z" fill="#e8a90a" /></svg>
);
const DevCpp = () => (
  <div className="flex h-7 w-[27px] flex-col items-center overflow-hidden bg-[linear-gradient(180deg,#8e90c8_0%,#2f3d92_45%,#0d5ee6_60%,#1a5aae_100%)] text-[12px] font-bold leading-[14px] tracking-[-0.300px]">
    <span className="text-white">DEV</span><span className="text-[#0a1430]">C++</span>
  </div>
);
const Task = ({ w, open, children }: { w: string; open?: boolean; children: React.ReactNode }) => (
  <span className={"flex h-[50px] shrink-0 flex-col items-center " + w}>
    <span className="flex h-[47px] items-center pt-[3px]">{children}</span>
    {open && <span className="h-[3px] w-[51px] bg-[#76b9ed]" />}
  </span>
);
const Taskbar = () => (
  <div className="flex h-[50px] items-center bg-[#101010] text-white">
    <svg viewBox="0 0 20 20" className="ml-5 size-5" fill="#fff"><path d="M0 2.800l8-1.100v7.700H0zM9 1.500L20 0v9.400H9zM0 10.500h8v7.700l-8-1.100zM9 10.500h11V20L9 18.400z" /></svg>
    <div className="ml-5 flex h-[50px] w-[430px] items-center border border-[#bdbdbd] bg-[#f3f3f3] text-[#3a3a3a]">
      <svg viewBox="0 0 20 20" className="ml-[14px] size-5" fill="none" stroke="#222" strokeWidth="1.400"><circle cx="12.500" cy="7" r="6.300" /><path d="M8 11.500L.5 19.300" /></svg>
      <span className="ml-[15px] pt-px text-[16.500px] tracking-[0.600px]">Type here to search</span>
    </div>
    <Task w="w-[60px]"><svg viewBox="0 0 20 20" className="size-5" fill="none" stroke="#fff" strokeWidth="2.200"><circle cx="10" cy="10" r="8.500" /></svg></Task>
    <Task w="w-[60px]"><svg viewBox="0 0 20 20" className="size-5" fill="none" stroke="#fff" strokeWidth="1.200"><path d="M1 .5v3.500h12V.5M1 6.500h12v7H1zM1 19.500V16h12v3.500M18 .5v4M18 10v9.500" /><path d="M17 6.500h2v2h-2z" fill="#fff" /></svg></Task>
    <Task w="w-[67px]"><Edge /></Task>
    <Task w="w-[57px]"><Explorer /></Task>
    <Task w="w-[67px]"><Mail /></Task>
    <Task w="w-[57px]"><FaDropbox className="size-[29px]" /></Task>
    <Task w="w-[67px]"><svg viewBox="0 0 14 30" className="h-[30px] w-[14px]" fill="#fff"><path d="M12 0C8 3 2 8 1.500 11.500 1 14 4 17 6 20l1 2 6-6c-2-2-5-3.500-5-6C8 7 10.500 3.500 12 0zM3 30c4-4 10-9 10.500-12.500C14 15 11.500 13.500 9 11l-1 1c2 2 1 4.500-1 8z" /></svg></Task>
    <Task w="w-[59px]" open><Chrome /></Task>
    <Task w="w-[65px]"><TeamsLogo className="size-[29px]" /></Task>
    <Task w="w-[59px]" open><Sticky /></Task>
    <Task w="w-[64px]" open><DevCpp /></Task>
    <svg viewBox="0 0 16 9" className="ml-[372px] h-[9px] w-4" fill="none" stroke="#fff" strokeWidth="1.300"><path d="M.5 8.500L8 1l7.500 7.500" /></svg>
    <svg viewBox="0 0 20 13" className="ml-[12px] h-[13px] w-5"><path d="M4 12.500a4 4 0 0 1 0-8A6 6 0 0 1 15.500 5 4 4 0 0 1 16 12.500z" fill="#a8a8a8" /><path d="M2 11.500l11-6a5 5 0 0 1 3-1A4 4 0 0 1 16 12.500H4a4 4 0 0 1-2-1z" fill="#fff" /></svg>
    <svg viewBox="0 0 13 20" className="ml-[13px] h-5 w-[13px]"><rect x="2.500" width="8" height="14" fill="#fff" /><path d="M.6 10v4a2 2 0 0 0 2 2h7.800a2 2 0 0 0 2-2v-4M6.500 16v3.500M3 19.400h7" stroke="#fff" fill="none" strokeWidth="1.200" /></svg>
    <svg viewBox="0 0 19 11" className="ml-[15px] h-[11px] w-[19px]"><path d="M.6 .6h16v9.800H.6z" stroke="#fff" fill="none" strokeWidth="1.200" /><path d="M2.300 2.300h9v6.400h-9zM17 3.500h2v4h-2z" fill="#fff" /></svg>
    <svg viewBox="0 0 16 16" className="ml-[13px] size-4" fill="none" strokeWidth="1.300"><path d="M.8 16A15.200 15.200 0 0 1 16 .8" stroke="#6b6b6b" /><path d="M4.500 16A11.500 11.500 0 0 1 16 4.500M8 16a8 8 0 0 1 8-8M11.500 16A4.500 4.500 0 0 1 16 11.500" stroke="#e6e6e6" /><circle cx="14.500" cy="14.500" r="1.500" fill="#fff" /></svg>
    <svg viewBox="0 0 21 18" className="ml-[11px] h-[18px] w-[21px]" fill="none" stroke="#fff" strokeWidth="1.200"><path d="M.6 6h3l4-4v14l-4-4h-3zM10.500 6.500a4 4 0 0 1 0 5M13.500 4a7 7 0 0 1 0 10" /><path d="M16.500 1.500a10.500 10.500 0 0 1 0 15" stroke="#777" /></svg>
    <span className="ml-[12.500px] pt-px text-[13.800px] leading-none">ENG</span>
    <div className="ml-[16px] w-[76px] whitespace-nowrap text-center text-[14.300px] leading-[23px]">13:13<br />23-02-2021</div>
    <svg viewBox="0 0 20 20" className="ml-[23px] size-5" fill="none" stroke="#fff" strokeWidth="1.300"><path d="M.6 .6h18.800v15h-6.500L10 18.500l-2.900-2.900H.6z" /></svg>
    <span className="ml-auto mr-[4px] h-[50px] w-px bg-[#5a5a5a]" />
  </div>
);

export default function App() {
  return (
    <div className="flex h-[1080px] w-[1920px] flex-col overflow-hidden font-['Open_Sans',sans-serif]">
      <TabStrip />
      <AddressBar />
      <Bookmarks />
      <TeamsHeader />
      <div className="flex h-[841px]">
        <Rail />
        <Stage />
        <People />
      </div>
      <Taskbar />
    </div>
  );
}
